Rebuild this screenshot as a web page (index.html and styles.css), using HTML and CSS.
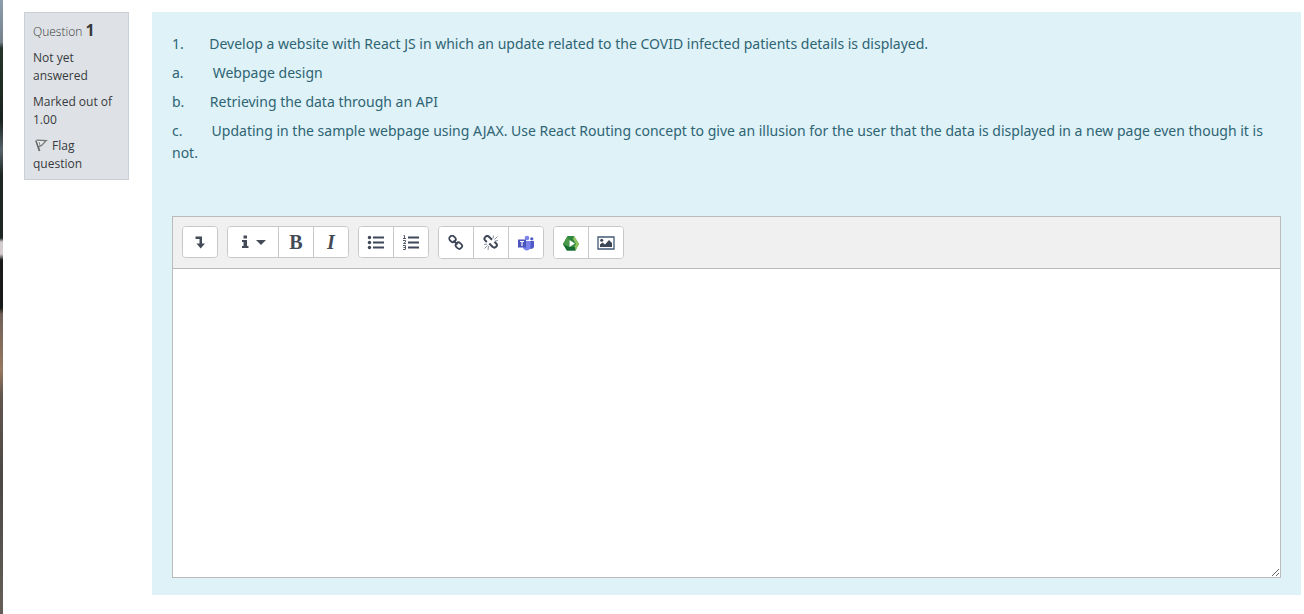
FILE: index.html
```html
<!DOCTYPE html>
<html lang="en">
<head>
<meta charset="utf-8">
<meta name="viewport" content="width=device-width, initial-scale=1">
<title>Question 1</title>
<link rel="stylesheet" href="styles.css">
</head>
<body>
<main class="page">
  <aside class="info">
    <h3 class="info-title">Question <span class="info-number">1</span></h3>
    <div class="info-row">Not yet answered</div>
    <div class="info-row">Marked out of 1.00</div>
    <a class="info-row info-flag" href="#flag"><svg class="flag" viewBox="0 0 16 16" aria-hidden="true"><path d="M3 3.500 6.500 14" stroke="#666" stroke-width="1.800" fill="none"/><path d="M3.500 3.200 13 3.600C11 5 10.500 8.500 6 9.500" fill="#e6e8eb" stroke="#777" stroke-width="1.300"/><path d="M6 5 7.300 9" stroke="#888" fill="none"/></svg>Flag question</a>
  </aside>
  <section class="formulation">
    <div class="prompt">
      <p>1.&nbsp;&nbsp;&nbsp;&nbsp;&nbsp;&nbsp; Develop a website with React JS in which an update related to the COVID infected patients details is displayed.</p>
      <p>a.&nbsp;&nbsp;&nbsp;&nbsp;&nbsp;&nbsp;&nbsp; Webpage design</p>
      <p>b.&nbsp;&nbsp;&nbsp;&nbsp;&nbsp;&nbsp; Retrieving the data through an API</p>
      <p>c.&nbsp;&nbsp;&nbsp;&nbsp;&nbsp;&nbsp;&nbsp; Updating in the sample webpage using AJAX. Use React Routing concept to give an illusion for the user that the data is displayed in a new page even though it is not.</p>
    </div>
    <div class="editor">
      <div class="toolbar" role="toolbar" aria-label="Text formatting">
        <div class="group">
          <button type="button" class="tool" aria-label="Show more buttons"><svg viewBox="0 0 16 16"><path d="M3.500 2.500h6.500v7h3L8.700 14.500 4.500 9.500h3v-4.500h-4z" fill="#444b57"/></svg></button>
        </div>
        <div class="group">
          <button type="button" class="tool tool-menu" aria-label="Paragraph styles"><svg viewBox="0 0 16 16"><path d="M6.500 1.500h3.500v3H6.500zM5 6h5v6h1.500v2H5v-2h1.500V8H5z" fill="#444b57"/></svg><svg viewBox="0 0 16 16"><path d="M3 6h10l-5 5z" fill="#444b57"/></svg></button>
          <button type="button" class="tool letter bold">B</button>
          <button type="button" class="tool letter italic">I</button>
        </div>
        <div class="group">
          <button type="button" class="tool" aria-label="Unordered list"><svg class="list" viewBox="0 0 18 16"><g fill="#3e4757"><circle cx="2.500" cy="3.500" r="1.700"/><circle cx="2.500" cy="8.500" r="1.700"/><circle cx="2.500" cy="13.500" r="1.700"/><path d="M6 2.500h11v2H6zM6 7.500h11v2H6zM6 12.500h11v2H6z"/></g></svg></button>
          <button type="button" class="tool" aria-label="Ordered list"><svg class="list" viewBox="0 0 18 16"><path d="M6 2.500h11v2H6zM6 7.500h11v2H6zM6 12.500h11v2H6z" fill="#3e4757"/><path d="M1.500 1.500h1v3M1 4.500h3M1 6.500h2.500v1.500L1.500 9.500H4M1 11.500h2.500v4H1M1.500 13.500h2" fill="none" stroke="#555c68"/></svg></button>
        </div>
        <div class="group group-tall">
          <button type="button" class="tool" aria-label="Link"><svg viewBox="0 0 16 16"><g fill="none" stroke="#3e4757" stroke-width="1.800"><rect x="1.200" y="1.200" width="6.500" height="5.500" rx="2.500" transform="rotate(42 4.500 4)"/><rect x="7.500" y="8" width="6.500" height="5.500" rx="2.500" transform="rotate(42 11 10.800)"/><path d="m5.500 5.500 4 4"/></g></svg></button>
          <button type="button" class="tool" aria-label="Unlink"><svg viewBox="0 0 16 16"><path d="M3.800 7 2 5.200C.2 3 3.500-.3 5.700 1.500L9 4.800M6.300 8.500l3.200 3.300c2.500 2.200 6-1 3.700-3.300L11.500 6.800" fill="none" stroke="#3e4757" stroke-width="2"/><path d="m10 3.500.5-3M11.500 4.500l3-3M12 6l3-.500M5.500 11l-.500 4M4.500 10.500l-3 3M4 9l-3 .5" stroke="#8b94a2" fill="none"/></svg></button>
          <button type="button" class="tool" aria-label="Microsoft Teams"><svg class="teams" viewBox="0 0 18 16"><circle cx="10" cy="3" r="2.300" fill="#7b83eb"/><circle cx="14.800" cy="3.800" r="1.600" fill="#5059c9"/><path d="M12 6h5v5c0 2-1 3-4 3z" fill="#5059c9"/><path d="M6 6h7.500v6c0 4.500-7.500 4.500-7.500 0z" fill="#7b83eb"/><path d="M1 4.500h8v8H1z" fill="#4b53bc"/><path d="M3 6.500h4M5 6.500v4.500" stroke="#fff" stroke-width="1.200" fill="none"/></svg></button>
        </div>
        <div class="group group-tall">
          <button type="button" class="tool" aria-label="Insert video"><svg class="video" viewBox="0 0 18 16"><path d="M5.500 1 12 1 17 9 13.500 15.500H5L1 9z" fill="#2f873f"/><path d="M12 1l5 8-3.500 6.500-2.500-2L14 9 11 4z" fill="#91c45f"/><path d="M1 9 5.500 1 7 4.500V12L5 15.500z" fill="#4b9a4b"/><path d="M1 9 7 12h6l.500 3.500H5z" fill="#176b35"/><path d="m7.500 5 5.500 3.500L7.500 12z" fill="#fff"/></svg></button>
          <button type="button" class="tool" aria-label="Insert image"><svg class="list" viewBox="0 0 18 16"><path d="M1 2h16v12H1z" fill="#fff" stroke="#405a75" stroke-width="1.300"/><circle cx="4.700" cy="5.300" r="1.500" fill="#3e4757"/><path d="M3 12V9.500L5.500 7.500l2.500 2 4-4.500 3 3V12z" fill="#3e4757"/></svg></button>
        </div>
      </div>
      <textarea class="answer" aria-label="Answer text"></textarea>
    </div>
  </section>
</main>
</body>
</html>
```
FILE: styles.css
```css
* { box-sizing: border-box; }

body {
  margin: 0;
  min-height: 100vh;
  padding-left: 3px;
  background: linear-gradient(#8c9eae 0, #75818b 42px, #26352b 48px, #18231d 120px, #58626b 150px, #1c2721 175px, #1c2721 238px, #d5cdd0 242px, #d5cdd0 254px, #18191b 260px, #181a19 308px, #6f6057 314px, #96785f 370px, #62564e 395px, #4c4845 480px, #655e58 614px);
  font-family: "Open Sans", "Noto Sans", sans-serif;
}

.page {
  display: flex;
  align-items: flex-start;
  gap: 23px;
  min-height: 100vh;
  padding: 12px 3px 19px 21px;
  background: #fff;
}

.info {
  flex: 0 0 105px;
  padding: 9px 8px 6px;
  border: 1px solid #cad0d7;
  background: #dee2e6;
  color: #373a3c;
  font-size: 12px;
  line-height: 18px;
}

.info-title {
  margin: 0;
  font-size: 12px;
  font-weight: 300;
  line-height: 18px;
}

.info-number {
  font-size: 16px;
  font-weight: 700;
  line-height: 16px;
}

.info-row {
  display: block;
  margin-top: 8px;
}

.info-flag {
  color: inherit;
  text-decoration: none;
}

.flag {
  width: 16px;
  height: 16px;
  margin-right: 3px;
  vertical-align: -3px;
}

.formulation {
  flex: 1;
  min-width: 0;
  padding: 21px 20px 17px;
  background: #def2f8;
  color: #2f6473;
}

.prompt {
  margin-bottom: 52px;
  font-family: "Noto Sans", "Open Sans", sans-serif;
  font-size: 14px;
  line-height: 22px;
}

.prompt p { margin: 0 0 7px; }

.editor {
  border: 1px solid #bbb;
  background: #fff;
}

.toolbar {
  display: flex;
  flex-wrap: wrap;
  align-items: flex-start;
  gap: 9px;
  padding: 9px;
  border-bottom: 1px solid #bbb;
  background: #f0f0f0;
}

.group {
  display: flex;
  height: 32px;
  overflow: hidden;
  border: 1px solid #c8c8c8;
  border-radius: 4px;
  background: #fff;
}

.group-tall { height: 33px; }

.tool {
  display: flex;
  align-items: center;
  justify-content: center;
  width: 34px;
  padding: 0;
  border: 0;
  background: #fff;
  color: #444b57;
}

.tool + .tool {
  width: 35px;
  border-left: 1px solid #c8c8c8;
}

.tool-menu { width: 50px; }

.tool svg {
  width: 16px;
  height: 16px;
}

.tool .list,
.tool .teams,
.tool .video { width: 18px; }

.letter {
  font-family: "Liberation Serif", serif;
  font-size: 20px;
  line-height: 24px;
}

.bold { font-weight: 700; }

.italic {
  font-style: italic;
  font-weight: 700;
}

.answer {
  display: block;
  width: 100%;
  height: 308px;
  padding: 8px;
  border: 0;
  outline: 0;
  resize: vertical;
  color: #373a3c;
  font: inherit;
}
```
